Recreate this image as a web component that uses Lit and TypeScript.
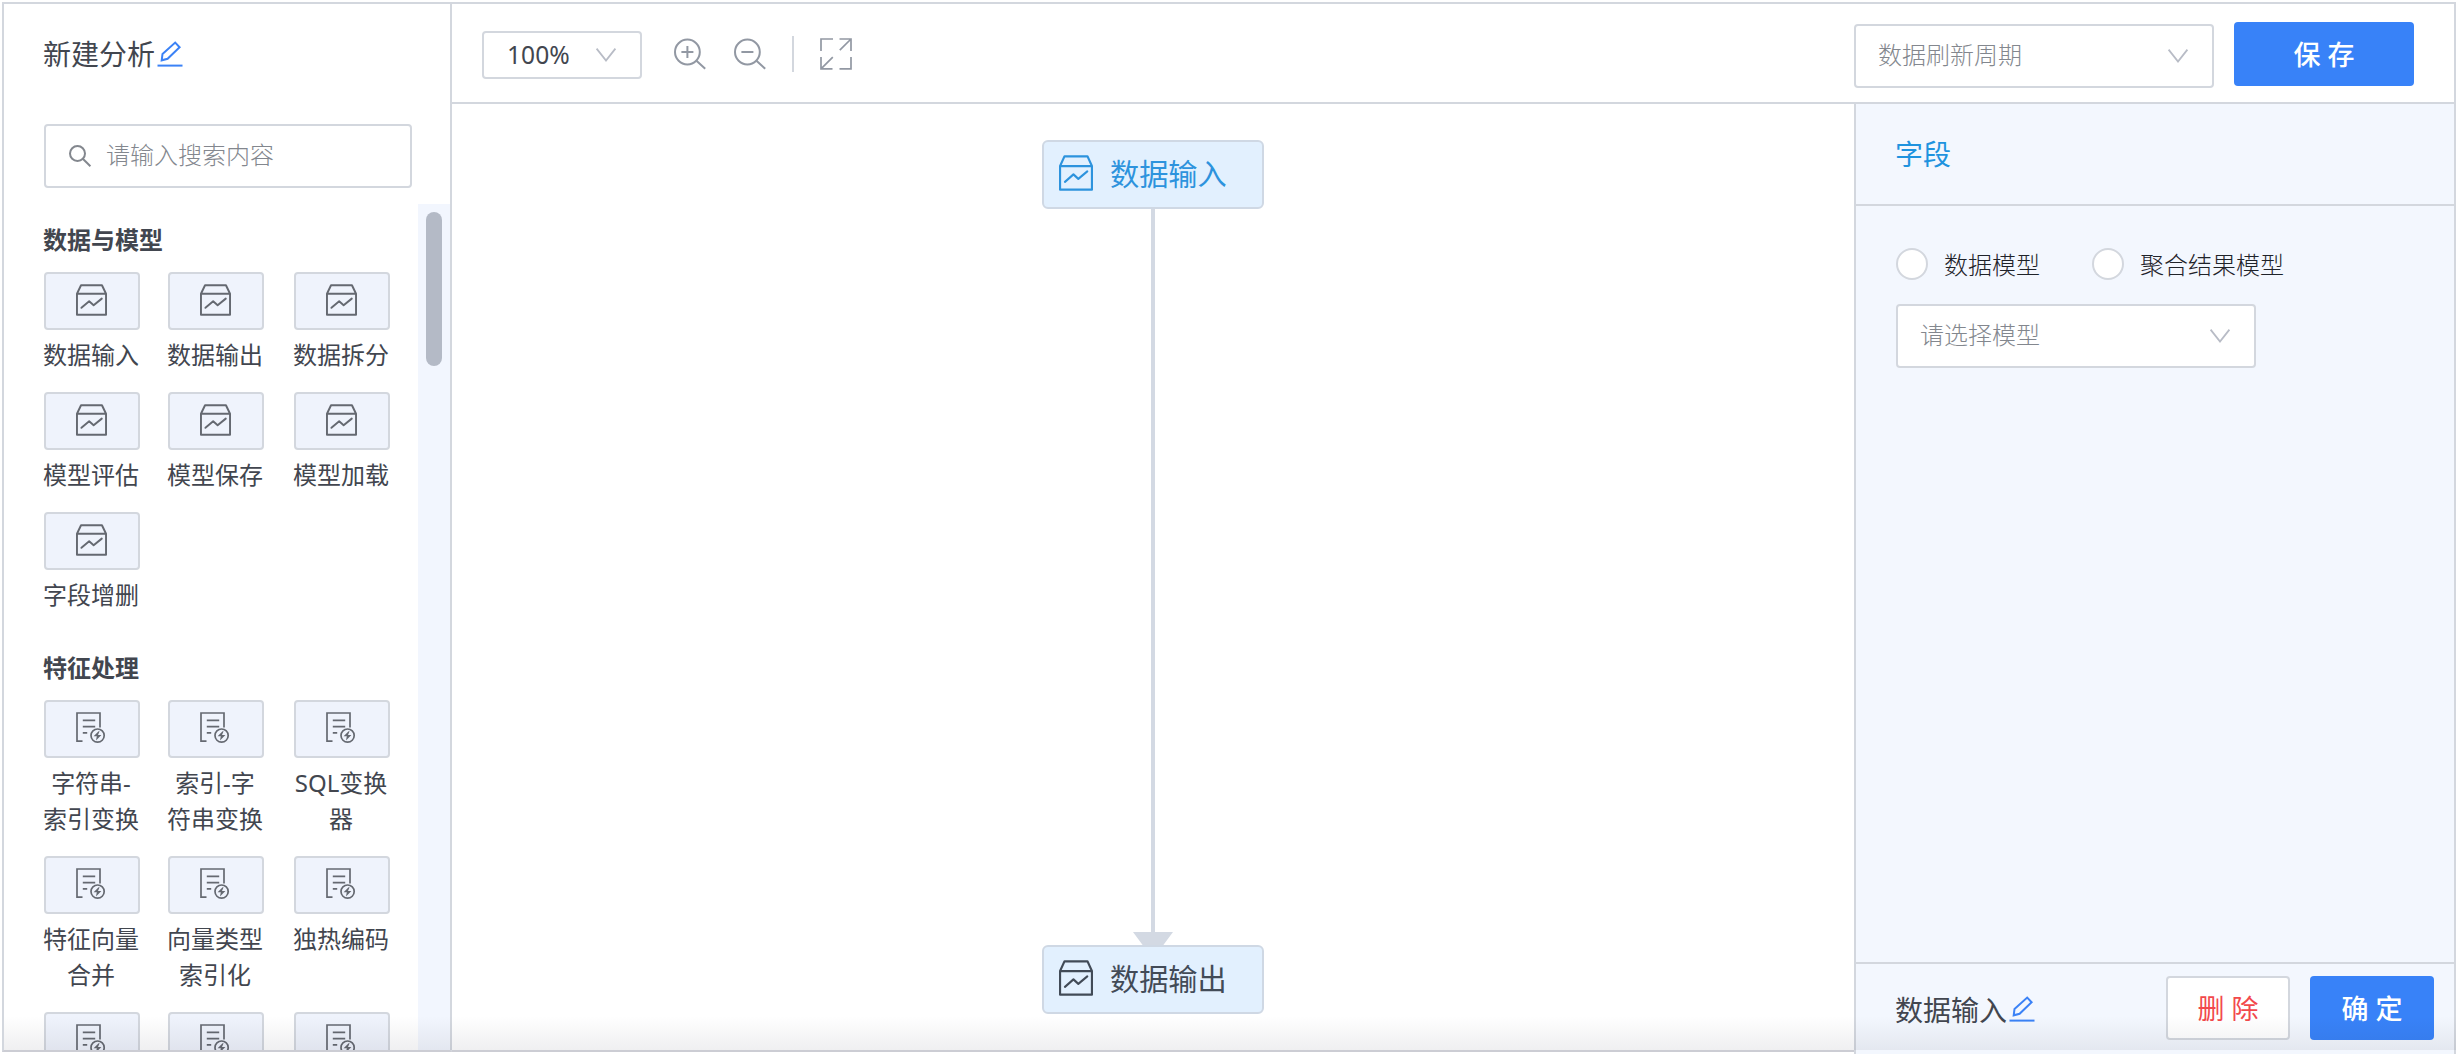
import { LitElement, html, css, svg } from "lit";
import { customElement, property } from "lit/decorators.js";

const boxIcon = svg`<path d="M5.200 1.200h21.600l4.200 8.600v21H1V9.800zM1 9.800h30M5.600 23.800l8-6.600 4.600 4 8.400-6.600"/>`;
const docIcon = svg`<path d="M6.500 29.200H1V1h23v14.500M6.800 8.300h12.400M6.800 14.600h12.400M6.800 20.800h4.400"/><circle cx="21.600" cy="23.600" r="6.600"/><path class="fill" d="M22.600 19.200l-5 5h3.200l-.8 4.200 5.400-5.400h-3.400l1.600-3.800z"/>`;

@customElement("line-icon")
export class LineIcon extends LitElement {
  static styles = css`
    :host { display: block; flex: none; }
    svg { display: block; width: 100%; height: 100%; overflow: visible; fill: none; stroke: currentColor; }
    .fill { fill: currentColor; stroke: none; }
    .chevron { stroke-width: 1.8; }
    .thin { stroke-width: 1.7; }
    .tile { stroke-width: 2; }
    .mid { stroke-width: 2; }
  `;
  @property() name = "";

  render() {
    switch (this.name) {
      case "box":
        return html`<svg class="tile" viewBox="0 0 32 32" stroke-linejoin="round" stroke-linecap="round" preserveAspectRatio="none">${boxIcon}</svg>`;
      case "doc":
        return html`<svg class="thin" viewBox="0 0 29 31" preserveAspectRatio="none">${docIcon}</svg>`;
      case "edit":
        return html`<svg class="mid" viewBox="0 0 26 26"><path d="M0.500 24.600h25"/><path d="M4.700 19.300l.8-6.400L18.200 1.600l4.400 4.600-12 11.600z" stroke-linejoin="miter"/></svg>`;
      case "search":
        return html`<svg class="mid" viewBox="0 0 22 22"><circle cx="8.500" cy="8.500" r="7.500"/><path d="M13.800 13.800l7.600 7.400"/></svg>`;
      case "chevron":
        return html`<svg class="chevron" viewBox="0 0 20 14"><path d="M.6.600L10 12.600 19.400.600"/></svg>`;
      case "zoom-in":
        return html`<svg class="mid" viewBox="0 0 32 32"><circle cx="13.400" cy="14" r="12.400"/><path d="M7.400 14h12M13.400 8v12M22.200 22.400l9 8.400"/></svg>`;
      case "zoom-out":
        return html`<svg class="mid" viewBox="0 0 32 32"><circle cx="13.400" cy="14" r="12.400"/><path d="M7.400 14h12M22.200 22.400l9 8.400"/></svg>`;
      case "expand":
        return html`<svg class="thin" viewBox="0 0 32 32"><path d="M1 13V1h12M19.500 1H31v12M31 1L19.800 12.200M31 19v11.800H19.500M1 19v11.800h11.500M1 30.800l11.800-11.600"/></svg>`;
    }
    return null;
  }
}

interface Group {
  title: string;
  icon: string;
  items: string[];
}

const groups: Group[] = [
  { title: "数据与模型", icon: "box", items: ["数据输入", "数据输出", "数据拆分", "模型评估", "模型保存", "模型加载", "字段增删"] },
  { title: "特征处理", icon: "doc", items: ["字符串-索引变换", "索引-字符串变换", "SQL变换器", "特征向量合并", "向量类型索引化", "独热编码", "", "", ""] },
];

@customElement("app-root")
export class AppRoot extends LitElement {
  static styles = css`
    :host {
      display: block; width: 2456px; height: 1054px; overflow: hidden; position: relative; background: #fff;
      font-family: "Noto Sans", "Noto Sans CJK SC", sans-serif; font-size: 24px; line-height: 36px; color: #42464f;
    }
    * { box-sizing: border-box; }
    .frame { display: flex; height: 1054px; padding: 2px 0 0 2px; }
    .sidebar {
      width: 450px; height: 1050px; flex: none; display: flex; flex-direction: column;
      border: 2px solid #d3d7de; border-bottom-color: #cccdd4;
    }
    .title { display: flex; align-items: center; height: 100px; padding-left: 39px; font-size: 28px; }
    .title line-icon { width: 26px; height: 26px; margin-left: 2px; color: #3b82f6; }
    .search {
      display: flex; align-items: center; gap: 15px; height: 64px; width: 368px; margin: 20px 0 16px 40px;
      padding: 0 0 2px 23px; border: 2px solid #d3d7de; border-radius: 4px; color: #83878e; font-weight: 300;
    }
    .search line-icon { width: 22px; height: 22px; margin-top: 2px; }
    .library { display: flex; flex: 1; min-height: 0; }
    .groups { flex: 1; padding-left: 40px; overflow: hidden; }
    .group { padding-top: 18px; }
    .group-title { font-weight: 700; margin: 0 0 14px -1px; }
    .grid { display: grid; grid-template-columns: 96px 96px 96px; column-gap: 29px; }
    .item { text-align: center; padding-bottom: 18px; }
    .item:nth-child(3n + 2) { margin: 0 1px 0 -1px; }
    .label { min-height: 36px; margin: -1px 1px 1px -1px; }
    .tile {
      display: flex; justify-content: center; height: 58px; margin-bottom: 8px; padding-top: 10px;
      border: 2px solid #d3d7de; border-radius: 4px; background: #eff3fc; color: #656971;
    }
    .tile .box { width: 31px; height: 32px; margin-right: 1px; }
    .tile .doc { width: 29px; height: 31px; margin-right: 3px; }
    .track { width: 32px; background: #f2f6fe; padding: 8px 8px 0; }
    .thumb { height: 154px; border-radius: 8px; background: #b4bac6; }
    .main { flex: 1; display: flex; flex-direction: column; min-width: 0; border-top: 2px solid #d3d7de; }
    .toolbar {
      display: flex; align-items: center; height: 100px; flex: none; border-bottom: 2px solid #d3d7de;
      border-right: 2px solid #d3d7de; padding: 0 40px 0 30px;
    }
    .select {
      display: flex; align-items: center; justify-content: space-between; width: 360px; height: 64px;
      padding: 0 24px 2px 22px; border: 2px solid #d3d7de; border-radius: 4px; background: #fff; color: #83878e; font-weight: 300;
    }
    .select line-icon { width: 20px; height: 14px; color: #b8bcc6; margin-top: 2px; }
    .select.zoom { width: 160px; height: 48px; padding: 0 24px 0 23px; margin-top: 4px; color: #42464f; font-weight: 400; margin-right: 32px; font-size: 24.600px; }
    .select.zoom line-icon { margin-top: 0; }
    .tools { display: flex; align-items: center; flex: 1; color: #9298a3; padding-top: 2px; }
    .tools line-icon { width: 32px; height: 32px; }
    .tools .out { margin-left: 28px; }
    .divider { width: 2px; height: 36px; margin: 0 26px; background: #d3d7de; }
    .period { margin: 6px 20px 0 0; }
    .button {
      display: flex; align-items: center; justify-content: center; height: 64px; width: 124px; border-radius: 4px;
      background: #3882f8; color: #fff; font-size: 27px; font-weight: 500; white-space: pre;
    }
    .save { width: 180px; margin-top: 2px; padding-top: 1px; }
    .actions .button { padding-top: 2px; }
    .danger { background: #fff; color: #f2494c; border: 2px solid #d3d7de; font-weight: 400; }
    .body { display: flex; flex: 1; min-height: 0; }
    .canvas { position: relative; flex: 1; height: 948px; border-bottom: 2px solid #cccdd4; overflow: hidden; }
    .edge { position: absolute; left: 681px; top: 104px; width: 40px; height: 752px; fill: #d3d9e3; }
    .node {
      position: absolute; left: 590px; width: 222px; height: 69px; display: flex; align-items: center;
      padding: 0 0 1px 15px; gap: 17px; border: 2px solid #cfd8e4; border-radius: 6px; background: #e2f0fe; font-size: 29.200px;
    }
    .node line-icon { width: 34px; height: 36px; margin-bottom: 2px; }
    .source { top: 36px; color: #2d93dd; }
    .sink { top: 841px; color: #424b57; }
    .panel { width: 602px; flex: none; display: flex; flex-direction: column; background: #f3f7fe; border-left: 2px solid #d3d7de; border-right: 2px solid #d3d7de; }
    .tab { height: 102px; border-bottom: 2px solid #d3d7de; padding-left: 39px; font-size: 28px; line-height: 100px; color: #1f93df; }
    .form { flex: 1; padding: 42px 0 0 40px; color: #1f232a; }
    .radios { display: flex; align-items: center; height: 32px; margin-bottom: 24px; font-weight: 300; }
    .radio { display: flex; align-items: center; gap: 16px; margin-right: 52px; }
    .caption { padding-top: 2px; }
    .dot { width: 32px; height: 32px; border-radius: 50%; border: 2px solid #d3d7de; background: #fff; }
    .footer { display: flex; align-items: center; height: 92px; padding: 0 20px 2px 39px; border-top: 2px solid #d3d7de; }
    .name { display: flex; align-items: center; flex: 1; font-size: 28px; padding-top: 3px; }
    .name line-icon { width: 26px; height: 26px; margin: 0 0 2px 2px; color: #3b82f6; }
    .actions { display: flex; gap: 20px; }
    .fade { position: absolute; left: 4px; right: 0; bottom: 4px; height: 34px; background: linear-gradient(rgba(20, 20, 40, 0), rgba(20, 20, 40, 0.065)); pointer-events: none; }
  `;

  private group(g: Group) {
    return html`<section class="group">
      <div class="group-title">${g.title}</div>
      <div class="grid">
        ${g.items.map((t) => html`<div class="item"><div class="tile"><line-icon class=${g.icon} name=${g.icon}></line-icon></div><div class="label">${t}</div></div>`)}
      </div>
    </section>`;
  }

  render() {
    return html`
      <div class="frame">
        <aside class="sidebar">
          <div class="title">新建分析<line-icon name="edit"></line-icon></div>
          <div class="search"><line-icon name="search"></line-icon>请输入搜索内容</div>
          <div class="library">
            <div class="groups">${groups.map((g) => this.group(g))}</div>
            <div class="track"><div class="thumb"></div></div>
          </div>
        </aside>
        <div class="main">
          <header class="toolbar">
            <div class="select zoom">100%<line-icon name="chevron"></line-icon></div>
            <div class="tools">
              <line-icon name="zoom-in"></line-icon>
              <line-icon class="out" name="zoom-out"></line-icon>
              <div class="divider"></div>
              <line-icon name="expand"></line-icon>
            </div>
            <div class="select period">数据刷新周期<line-icon name="chevron"></line-icon></div>
            <div class="button save">保 存</div>
          </header>
          <div class="body">
            <main class="canvas">
              <svg class="edge" viewBox="0 0 40 752"><path d="M18 0h4v724h18l-20 27-20-27h18z"/></svg>
              <div class="node source"><line-icon name="box"></line-icon>数据输入</div>
              <div class="node sink"><line-icon name="box"></line-icon>数据输出</div>
            </main>
            <aside class="panel">
              <div class="tab">字段</div>
              <div class="form">
                <div class="radios">
                  <div class="radio"><span class="dot"></span><span class="caption">数据模型</span></div>
                  <div class="radio"><span class="dot"></span><span class="caption">聚合结果模型</span></div>
                </div>
                <div class="select">请选择模型<line-icon name="chevron"></line-icon></div>
              </div>
              <footer class="footer">
                <div class="name">数据输入<line-icon name="edit"></line-icon></div>
                <div class="actions">
                  <div class="button danger">删 除</div>
                  <div class="button">确 定</div>
                </div>
              </footer>
            </aside>
          </div>
        </div>
      </div>
      <div class="fade"></div>
    `;
  }
}
